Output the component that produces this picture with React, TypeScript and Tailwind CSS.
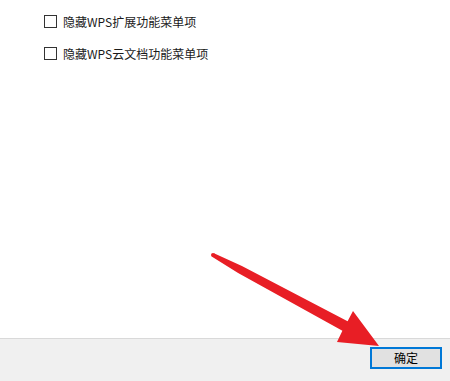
import React from "react";

const font = { fontFamily: '"Microsoft YaHei", "Noto Sans CJK SC", "Noto Sans", sans-serif' };

function Row({ label }: { label: string }) {
  return (
    <div className="flex h-[19px] items-center">
      <span className="box-border h-[13px] w-[13px] border border-[#333333] bg-white" />
      <span className="ml-[6px] text-[12px] leading-[19px] text-[#1a1a1a]">{label}</span>
    </div>
  );
}

export default function App() {
  return (
    <div className="relative flex h-[381px] w-[450px] flex-col overflow-hidden bg-white" style={font}>
      <div className="flex flex-1 flex-col gap-[13px] pl-[44px] pt-[12px]">
        <Row label="隐藏WPS扩展功能菜单项" />
        <Row label="隐藏WPS云文档功能菜单项" />
      </div>
      <div className="flex h-[43px] items-start justify-end border-t border-[#d9d9d9] bg-[#f0f0f0] pr-[8px] pt-[8px]">
        <button className="box-border flex h-[22px] w-[72px] items-center justify-center border-2 border-[#0078d7] bg-[#e1e1e1] text-[12px] leading-none text-black">
          确定
        </button>
      </div>
      <svg className="pointer-events-none absolute left-0 top-0" width="450" height="381" viewBox="0 0 450 381">
        <polygon
          fill="#e81e25"
          points="213.95,253.24 241.9,266.1 347.6,321.2 353,311 379,346 337,342 342.4,330.8 238.1,273.1 212.05,256.76"
        />
        <circle cx="213" cy="255" r="2" fill="#e81e25" />
      </svg>
    </div>
  );
}
